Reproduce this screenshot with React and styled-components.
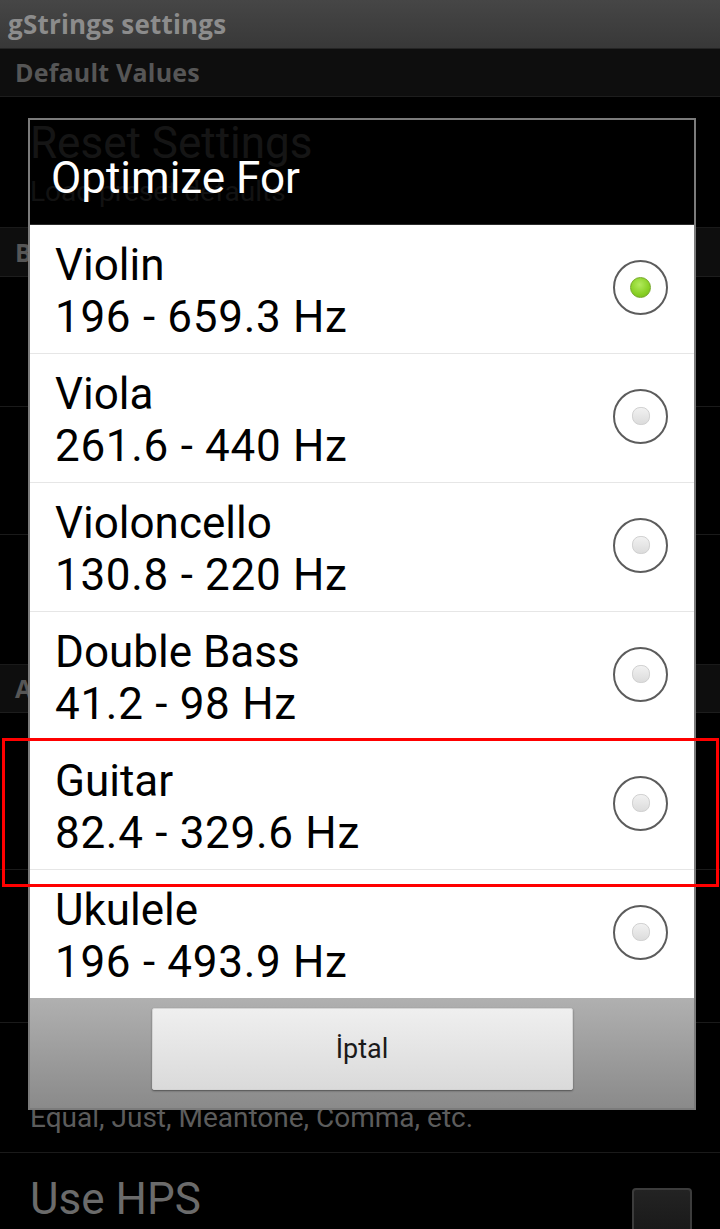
import React from "react";
import styled, { createGlobalStyle } from "styled-components";

const GlobalStyle = createGlobalStyle`
  html, body {
    margin: 0;
    padding: 0;
    background: #000;
  }
  body {
    font-family: Roboto, "Liberation Sans", sans-serif;
  }
`;

const Screen = styled.div`
  position: relative;
  width: 720px;
  height: 1229px;
  overflow: hidden;
  background: #000;
`;

// dimmed preference screen behind the dialog
const TitleBar = styled.div`
  height: 48px;
  padding-left: 8px;
  background: linear-gradient(#464646, #383838);
  border-bottom: 1px solid #252525;
  font: 700 26px/48px "Open Sans", sans-serif;
  letter-spacing: 0.2px;
  color: #8c8c8c;
`;

const Category = styled.div`
  box-sizing: border-box;
  height: ${(p) => p.$h}px;
  padding-left: 15px;
  background: #0e0e0e;
  border-bottom: 1px solid #1d1d1d;
  font: 700 25px/${(p) => p.$h - 1}px "Open Sans", sans-serif;
  letter-spacing: 0.2px;
  color: #565656;
`;

const PrefRow = styled.div`
  box-sizing: border-box;
  height: ${(p) => p.$h}px;
  padding: 20px 28px 0 30px;
  display: flex;
  align-items: flex-start;
  justify-content: space-between;
  border-bottom: 1px solid #1a1a1a;
`;

const PrefText = styled.div`
  display: flex;
  flex-direction: column;
  gap: 6px;
`;

const PrefTitle = styled.div`
  min-height: 52px;
  font-size: 44px;
  line-height: 52px;
  color: #6b6b6b;
`;

const PrefSummary = styled.div`
  font-size: 28px;
  color: #5c5c5c;
`;

const CheckBox = styled.span`
  box-sizing: border-box;
  align-self: center;
  width: 60px;
  height: 60px;
  margin-top: -20px;
  border: 2px solid #3c3c3c;
  border-radius: 4px;
  background: linear-gradient(#232323, #161616);
`;

// dialog
const Dialog = styled.div`
  position: absolute;
  left: 28px;
  top: 118px;
  width: 664px;
  border: 2px solid #7b7b7b;
  display: flex;
  flex-direction: column;
`;

const DialogTitle = styled.div`
  box-sizing: border-box;
  height: 105px;
  padding: 32px 0 0 21px;
  background: rgba(0, 0, 0, 0.8);
  border-bottom: 1px solid #2c2c2c;
  color: #fff;
  font-size: 44px;
  line-height: 52px;
`;

const OptionList = styled.div`
  background: #fff;
`;

const Option = styled.div`
  box-sizing: border-box;
  height: 129px;
  display: flex;
  align-items: center;
  justify-content: space-between;
  padding-left: 25px;
  border-bottom: 1px solid #e6e6e6;

  &:last-child {
    height: 128px;
    border-bottom: none;
  }
`;

const OptionText = styled.div`
  margin-top: 4px;
  color: #000;
  font-size: 44px;
  line-height: 52px;
`;

const Range = styled.div`
  letter-spacing: 0.7px;
`;

const Radio = styled.span`
  width: 51px;
  height: 51px;
  margin: 0 26px 4px 0;
  border: 2px solid #5c5c5c;
  border-radius: 50%;
  display: flex;
  align-items: center;
  justify-content: center;
`;

const Dot = styled.span`
  box-sizing: border-box;
  width: ${(p) => (p.$on ? 21 : 18)}px;
  height: ${(p) => (p.$on ? 21 : 18)}px;
  border-radius: ${(p) => (p.$on ? "50%" : "45%")};
  border: 1px solid ${(p) => (p.$on ? "#74a826" : "#d0d0d0")};
  background: ${(p) =>
    p.$on
      ? "radial-gradient(circle at 45% 35%, #b2ea5c, #88d024 60%, #70b418)"
      : "linear-gradient(#f1f1f1, #dcdcdc)"};
`;

const ButtonBar = styled.div`
  box-sizing: border-box;
  height: 110px;
  padding-top: 10px;
  display: flex;
  justify-content: center;
  align-items: flex-start;
  background: linear-gradient(#b0b0b0, #8a8a8a);
`;

const CancelButton = styled.button`
  width: 421px;
  height: 82px;
  border: 1px solid #d4d4d4;
  border-radius: 2px;
  background: linear-gradient(#efefef, #dadada);
  box-shadow: 0 1px 2px rgba(0, 0, 0, 0.45);
  font: 400 27px Roboto, sans-serif;
  color: #1a1a1a;
`;

const Highlight = styled.div`
  position: absolute;
  left: 2px;
  top: 738px;
  width: 717px;
  height: 149px;
  box-sizing: border-box;
  border: 3px solid #ff0000;
  pointer-events: none;
`;

const instruments = [
  { name: "Violin", range: "196 - 659.3 Hz", on: true },
  { name: "Viola", range: "261.6 - 440 Hz" },
  { name: "Violoncello", range: "130.8 - 220 Hz" },
  { name: "Double Bass", range: "41.2 - 98 Hz" },
  { name: "Guitar", range: "82.4 - 329.6 Hz" },
  { name: "Ukulele", range: "196 - 493.9 Hz" },
];

// rows hidden behind the dialog only show their separators
const hiddenRows = [130, 128, 130];
const advancedRows = [157, 153];

const App = () => {
  return (
    <Screen>
      <GlobalStyle />
      <TitleBar>gStrings settings</TitleBar>
      <Category $h={48}>Default Values</Category>
      <PrefRow $h={131}>
        <PrefText>
          <PrefTitle>Reset Settings</PrefTitle>
          <PrefSummary>Load preset defaults</PrefSummary>
        </PrefText>
      </PrefRow>
      <Category $h={49}>B</Category>
      {hiddenRows.map((h, i) => (
        <PrefRow key={"b" + i} $h={h} />
      ))}
      <Category $h={48}>A</Category>
      {advancedRows.map((h, i) => (
        <PrefRow key={"a" + i} $h={h} />
      ))}
      <PrefRow $h={130}>
        <PrefText>
          <PrefTitle />
          <PrefSummary>Equal, Just, Meantone, Comma, etc.</PrefSummary>
        </PrefText>
      </PrefRow>
      <PrefRow $h={130}>
        <PrefText>
          <PrefTitle>Use HPS</PrefTitle>
        </PrefText>
        <CheckBox />
      </PrefRow>

      <Dialog>
        <DialogTitle>Optimize For</DialogTitle>
        <OptionList>
          {instruments.map((it) => (
            <Option key={it.name}>
              <OptionText>
                <div>{it.name}</div>
                <Range>{it.range}</Range>
              </OptionText>
              <Radio>
                <Dot $on={it.on} />
              </Radio>
            </Option>
          ))}
        </OptionList>
        <ButtonBar>
          <CancelButton>İptal</CancelButton>
        </ButtonBar>
      </Dialog>

      <Highlight />
    </Screen>
  );
};

export default App;
